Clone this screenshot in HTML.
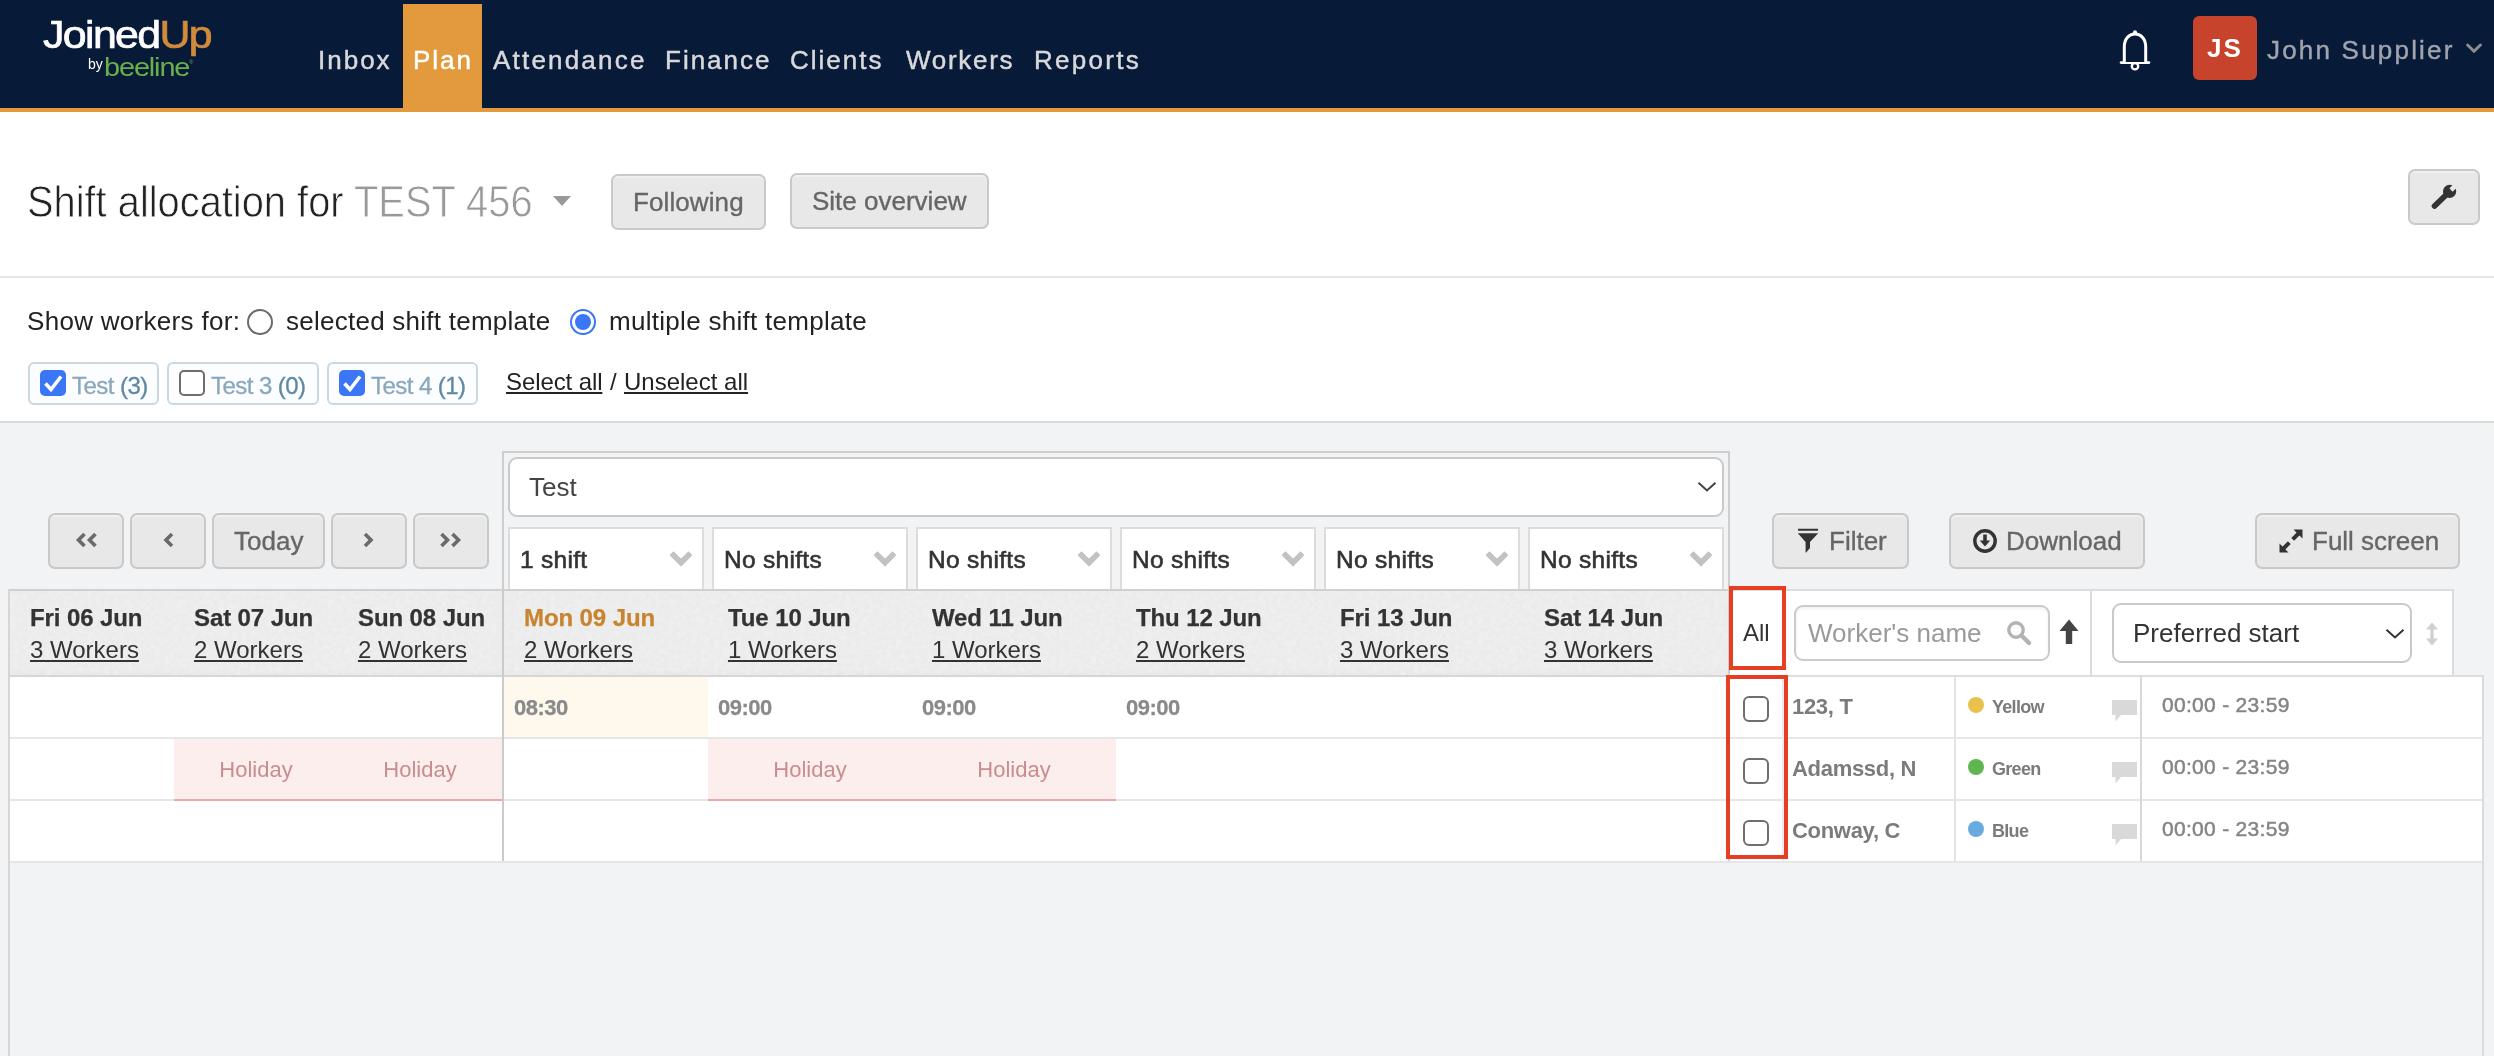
<!DOCTYPE html>
<html lang="en">
<head>
<meta charset="utf-8">
<title>Shift allocation</title>
<style>
*{box-sizing:border-box;margin:0;padding:0}
html,body{width:2494px;height:1056px;overflow:hidden}
body{position:relative;will-change:transform;background:#f2f3f5;font-family:"Liberation Sans",Arial,Helvetica,sans-serif;color:#222;-webkit-font-smoothing:antialiased}
.abs{position:absolute}
.t{position:absolute;white-space:nowrap;line-height:1}
a{color:inherit}
/* navbar */
#nav{left:0;top:0;width:2494px;height:112px;background:#071a37;border-bottom:4px solid #e29a3c}
#plan{left:403px;top:4px;width:79px;height:108px;background:#e29a3c}
.nv{font-size:26px;letter-spacing:2px;color:#d9d9dc;top:47px;-webkit-text-stroke:.45px #d9d9dc}
/* white sections */
#sec1{left:0;top:112px;width:2494px;height:166px;background:#fff;border-bottom:2px solid #e6e6e6}
#sec2{left:0;top:278px;width:2494px;height:145px;background:#fff;border-bottom:2px solid #d9d9d9}
.btn{position:absolute;background:#e8e8e8;border:2px solid #c9c9c9;border-radius:7px;color:#666;font-size:26px;line-height:1;white-space:nowrap;box-shadow:inset 0 2px 0 rgba(255,255,255,.35)}
.btn span{position:absolute;white-space:nowrap;-webkit-text-stroke:.35px #666}
.chip{position:absolute;top:362px;height:43px;border:2px solid #c9d9e3;border-radius:6px;background:#fcfdfe}
.cb{position:absolute;width:26px;height:26px;border-radius:5px}
.cb.on{background:#3a76f5}
.cb.off{background:#fff;border:2px solid #6e6e6e}
.chip .t{font-size:24px;color:#8aa7bc;top:10px;letter-spacing:-.55px;-webkit-text-stroke:.3px #8aa7bc}
.chip .t b{font-weight:normal;color:#5e88a4;-webkit-text-stroke:.3px #5e88a4}

/* schedule */
.nb{top:513px;height:56px}
.sel6{position:absolute;top:527px;height:64px;width:196px;background:#fff;border:2px solid #dcdcdc;border-bottom:none}
.sel6 .t{left:10px;top:19px;font-size:24.5px;letter-spacing:.3px;color:#333;-webkit-text-stroke:.6px #333}
.sel6 svg{position:absolute;left:160px;top:22px}
.dh{font-size:24px;font-weight:bold;color:#333;top:606px;letter-spacing:-.1px;margin-left:1px;-webkit-text-stroke:.25px currentColor}
.dw{font-size:24px;color:#333;top:638px;text-decoration:underline;margin-left:1px}
.hl{position:absolute;background:#e6e6e6;height:2px}
.vl{position:absolute;background:#e4e4e4;width:2px}
.tm{font-size:22px;font-weight:bold;color:#8a8a8a;top:697px;letter-spacing:-.5px;-webkit-text-stroke:.25px #8a8a8a}
.hol{position:absolute;top:739px;height:62px;background:#fdeeee;border-bottom:2px solid #eaa8a8}
.hol .t{font-size:22px;color:#c98d8d;top:20px;width:164px;text-align:center}
.wn{font-size:22px;font-weight:bold;color:#7b7b7b;left:1792px;letter-spacing:-.3px}
.wl{font-size:18px;font-weight:bold;color:#7b7b7b;left:1992px;letter-spacing:-.7px}
.wt{font-size:21px;color:#858585;left:2162px;letter-spacing:.3px;-webkit-text-stroke:.5px #858585}
.dot{position:absolute;left:1968px;width:16px;height:16px;border-radius:50%}
.cm{position:absolute;left:2112px}
.rb{position:absolute;border:4px solid #e73d22}
</style>
</head>
<body>

<!-- ===== NAVBAR ===== -->
<div id="nav" class="abs"></div>
<div id="plan" class="abs"></div>
<div class="t" style="left:43px;top:15px;font-size:39px;letter-spacing:-1.5px;color:#fff;transform:scaleX(1.1);transform-origin:0 0;-webkit-text-stroke:.7px #fff">Joined<span style="color:#d28a3c;-webkit-text-stroke:.7px #d28a3c">Up</span></div>
<div class="t" style="left:88px;top:57px;font-size:14px;color:#fff">by</div>
<div class="t" style="left:104px;top:54px;font-size:26px;letter-spacing:-1px;color:#6ab04a;transform:scaleX(1.11);transform-origin:0 0">beeline<span style="font-size:5px;vertical-align:12px;letter-spacing:0">®</span></div>
<div class="t nv" style="left:318px">Inbox</div>
<div class="t nv" style="left:413px;color:#fff;-webkit-text-stroke:.45px #fff">Plan</div>
<div class="t nv" style="left:493px;letter-spacing:2.2px">Attendance</div>
<div class="t nv" style="left:665px">Finance</div>
<div class="t nv" style="left:790px">Clients</div>
<div class="t nv" style="left:906px;letter-spacing:1.7px">Workers</div>
<div class="t nv" style="left:1034px;letter-spacing:2.3px">Reports</div>


<svg class="abs" style="left:2118px;top:29px" width="34" height="42" viewBox="0 0 34 42">
<circle cx="17" cy="37.2" r="3.2" stroke="#fff" stroke-width="2.4" fill="#071a37"/>
<path d="M3 33.6 H31" stroke="#fff" stroke-width="2.6" stroke-linecap="round" fill="none"/>
<path d="M6.3 33 V18 C6.300 9.800 10.800 5 17 5 C23.200 5 27.700 9.800 27.700 18 V33" stroke="#fff" stroke-width="3" fill="#071a37"/>
<circle cx="17" cy="3.400" r="2.1" fill="#fff"/>
</svg>
<div class="abs" style="left:2193px;top:16px;width:64px;height:64px;border-radius:6px;background:#c8432b"></div>
<div class="t" style="left:2207px;top:35px;font-size:26px;font-weight:bold;letter-spacing:2px;color:#fff">JS</div>
<div class="t" style="left:2267px;top:37px;font-size:26px;letter-spacing:2.2px;color:#a0a4ae;-webkit-text-stroke:.4px #a0a4ae">John Supplier</div>
<svg class="abs" style="left:2465px;top:42px" width="18" height="13" viewBox="0 0 18 13"><path d="M2.6 3 L9 9.300 L15.400 3" stroke="#8e8e8e" stroke-width="3" fill="none" stroke-linecap="round" stroke-linejoin="round"/></svg>

<!-- ===== TITLE SECTION ===== -->
<div id="sec1" class="abs"></div>
<div class="t" id="title" style="left:27px;top:179px;font-size:45px;color:#222;transform:scaleX(.885);transform-origin:0 0;-webkit-text-stroke:.8px #fff">Shift allocation for</div>
<div class="t" id="title2" style="left:354px;top:179px;font-size:45px;color:#999;transform:scaleX(.885);transform-origin:0 0;-webkit-text-stroke:.8px #fff">TEST 456</div>
<div class="abs" style="left:553px;top:196px;width:0;height:0;border-left:9.5px solid transparent;border-right:9.5px solid transparent;border-top:10px solid #999"></div>
<div class="btn" style="left:611px;top:174px;width:155px;height:56px"><span style="left:20px;top:13px;letter-spacing:.1px">Following</span></div>
<div class="btn" style="left:790px;top:173px;width:199px;height:56px"><span style="left:20px;top:13px">Site overview</span></div>
<div class="btn" style="left:2408px;top:169px;width:72px;height:56px">
<svg class="abs" style="left:20px;top:13px" width="30" height="28" viewBox="0 0 30 28"><circle cx="19.6" cy="7.4" r="6.6" fill="#333"/><path d="M21 6 L28 -1" stroke="#e8e8e8" stroke-width="4.6" fill="none"/><path d="M4.6 22 L16.500 10.5" stroke="#333" stroke-width="5.8" stroke-linecap="round" fill="none"/></svg>
</div>

<!-- ===== FILTER SECTION ===== -->
<div id="sec2" class="abs"></div>
<div class="t" style="left:27px;top:308px;font-size:26px;letter-spacing:.3px">Show workers for:</div>
<div class="abs" style="left:247px;top:309px;width:26px;height:26px;border-radius:50%;border:2px solid #6b6b6b;background:#fff"></div>
<div class="t" style="left:286px;top:308px;font-size:26px;letter-spacing:.25px">selected shift template</div>
<div class="abs" style="left:570px;top:309px;width:26px;height:26px;border-radius:50%;border:2px solid #3a76f5;background:#fff"></div>
<div class="abs" style="left:575px;top:314px;width:16px;height:16px;border-radius:50%;background:#3a76f5"></div>
<div class="t" style="left:609px;top:308px;font-size:26px;letter-spacing:.29px">multiple shift template</div>

<div class="chip" style="left:28px;width:131px"><div class="cb on" style="left:10px;top:6px"><svg width="26" height="26" viewBox="0 0 26 26"><path d="M5.5 13.5 L11 19.5 L21 6.5" stroke="#fff" stroke-width="3.6" fill="none" stroke-linejoin="miter"/></svg></div><div class="t" style="left:42px">Test <b>(3)</b></div></div>
<div class="chip" style="left:167px;width:152px"><div class="cb off" style="left:10px;top:6px"></div><div class="t" style="left:42px">Test 3 <b>(0)</b></div></div>
<div class="chip" style="left:327px;width:151px"><div class="cb on" style="left:10px;top:6px"><svg width="26" height="26" viewBox="0 0 26 26"><path d="M5.5 13.5 L11 19.5 L21 6.5" stroke="#fff" stroke-width="3.6" fill="none" stroke-linejoin="miter"/></svg></div><div class="t" style="left:42px">Test 4 <b>(1)</b></div></div>
<div class="t" style="left:506px;top:370px;font-size:24px;color:#222;letter-spacing:-.1px"><a style="text-decoration:underline">Select all</a></div>
<div class="t" style="left:610px;top:370px;font-size:24px;color:#222">/</div>
<div class="t" style="left:624px;top:370px;font-size:24px;color:#222"><a style="text-decoration:underline">Unselect all</a></div>

<!-- ===== SCHEDULE ===== -->
<div class="btn nb" style="left:48px;width:76px"><svg class="abs" style="left:24.5px;top:15.5px" width="24" height="18" viewBox="0 0 24 18"><path d="M9.5 3 L3.5 9 L9.5 15 M20.500 3 L14.500 9 L20.500 15" stroke="#6a6a6a" stroke-width="3.6" fill="none"/></svg></div>
<div class="btn nb" style="left:130px;width:76px"><svg class="abs" style="left:30px;top:15.5px" width="14" height="18" viewBox="0 0 14 18"><path d="M10 3 L4 9 L10 15" stroke="#6a6a6a" stroke-width="3.6" fill="none"/></svg></div>
<div class="btn nb" style="left:212px;width:113px"><span style="left:20px;top:13px">Today</span></div>
<div class="btn nb" style="left:331px;width:76px"><svg class="abs" style="left:28px;top:15.5px" width="14" height="18" viewBox="0 0 14 18"><path d="M4 3 L10 9 L4 15" stroke="#6a6a6a" stroke-width="3.6" fill="none"/></svg></div>
<div class="btn nb" style="left:413px;width:76px"><svg class="abs" style="left:23px;top:15.5px" width="24" height="18" viewBox="0 0 24 18"><path d="M3.5 3 L9.5 9 L3.5 15 M14.500 3 L20.500 9 L14.500 15" stroke="#6a6a6a" stroke-width="3.6" fill="none"/></svg></div>
<div class="abs" style="left:502px;top:451px;width:1228px;height:412px;border:2px solid #cdcdcd;border-bottom:none"></div>
<div class="abs" style="left:508px;top:457px;width:1216px;height:60px;background:#fff;border:2px solid #c9c9c9;border-radius:9px"></div>
<div class="t" style="left:529px;top:474px;font-size:26px;color:#444">Test</div>
<svg class="abs" style="left:1697px;top:481px" width="20" height="12" viewBox="0 0 20 12"><path d="M1.5 1.7 L10 9.5 L18.5 1.7" stroke="#444" stroke-width="2" fill="none"/></svg>
<div class="sel6" style="left:508px"><div class="t">1 shift</div><svg width="22" height="16" viewBox="0 0 22 16"><path d="M0 3.5 L3.5 0 L11 7.5 L18.5 0 L22 3.5 L11 14.5 Z" transform="translate(0 .7)" fill="#c2c2c2" stroke="#c2c2c2" stroke-width="1" stroke-linejoin="round"/></svg></div>
<div class="sel6" style="left:712px"><div class="t">No shifts</div><svg width="22" height="16" viewBox="0 0 22 16"><path d="M0 3.5 L3.5 0 L11 7.5 L18.5 0 L22 3.5 L11 14.5 Z" transform="translate(0 .7)" fill="#c2c2c2" stroke="#c2c2c2" stroke-width="1" stroke-linejoin="round"/></svg></div>
<div class="sel6" style="left:916px"><div class="t">No shifts</div><svg width="22" height="16" viewBox="0 0 22 16"><path d="M0 3.5 L3.5 0 L11 7.5 L18.5 0 L22 3.5 L11 14.5 Z" transform="translate(0 .7)" fill="#c2c2c2" stroke="#c2c2c2" stroke-width="1" stroke-linejoin="round"/></svg></div>
<div class="sel6" style="left:1120px"><div class="t">No shifts</div><svg width="22" height="16" viewBox="0 0 22 16"><path d="M0 3.5 L3.5 0 L11 7.5 L18.5 0 L22 3.5 L11 14.5 Z" transform="translate(0 .7)" fill="#c2c2c2" stroke="#c2c2c2" stroke-width="1" stroke-linejoin="round"/></svg></div>
<div class="sel6" style="left:1324px"><div class="t">No shifts</div><svg width="22" height="16" viewBox="0 0 22 16"><path d="M0 3.5 L3.5 0 L11 7.5 L18.5 0 L22 3.5 L11 14.5 Z" transform="translate(0 .7)" fill="#c2c2c2" stroke="#c2c2c2" stroke-width="1" stroke-linejoin="round"/></svg></div>
<div class="sel6" style="left:1528px"><div class="t">No shifts</div><svg width="22" height="16" viewBox="0 0 22 16"><path d="M0 3.5 L3.5 0 L11 7.5 L18.5 0 L22 3.5 L11 14.5 Z" transform="translate(0 .7)" fill="#c2c2c2" stroke="#c2c2c2" stroke-width="1" stroke-linejoin="round"/></svg></div>
<div class="abs" style="left:8px;top:589px;width:1720px;height:88px;background:linear-gradient(#ebebeb 0,#ebebeb 92%,#e7e7e7 100%);border-top:2px solid #d0d0d0;border-bottom:2px solid #d6d6d6"></div>
<svg class="abs" style="left:10px;top:591px" width="1718" height="84"><filter id="nz" x="0" y="0" width="100%" height="100%"><feTurbulence type="fractalNoise" baseFrequency=".22" numOctaves="2" seed="3"/><feColorMatrix values="0 0 0 0 1  0 0 0 0 1  0 0 0 0 1  1.2 1.2 0 0 -.9"/></filter><rect width="1718" height="84" filter="url(#nz)" opacity=".3"/></svg>
<div class="abs" style="left:10px;top:677px;width:2472px;height:184px;background:#fff"></div>
<div class="abs" style="left:8px;top:589px;width:2px;height:467px;background:#d6d6d6"></div>
<div class="abs" style="left:2482px;top:675px;width:2px;height:381px;background:#dcdcdc"></div>
<div class="t dh" style="left:29px">Fri 06 Jun</div><div class="t dw" style="left:29px">3 Workers</div>
<div class="t dh" style="left:193px">Sat 07 Jun</div><div class="t dw" style="left:193px">2 Workers</div>
<div class="t dh" style="left:357px">Sun 08 Jun</div><div class="t dw" style="left:357px">2 Workers</div>
<div class="t dh" style="left:523px;color:#c8842e">Mon 09 Jun</div><div class="t dw" style="left:523px">2 Workers</div>
<div class="t dh" style="left:727px">Tue 10 Jun</div><div class="t dw" style="left:727px">1 Workers</div>
<div class="t dh" style="left:931px">Wed 11 Jun</div><div class="t dw" style="left:931px">1 Workers</div>
<div class="t dh" style="left:1135px">Thu 12 Jun</div><div class="t dw" style="left:1135px">2 Workers</div>
<div class="t dh" style="left:1339px">Fri 13 Jun</div><div class="t dw" style="left:1339px">3 Workers</div>
<div class="t dh" style="left:1543px">Sat 14 Jun</div><div class="t dw" style="left:1543px">3 Workers</div>
<div class="abs" style="left:504px;top:677px;width:204px;height:60px;background:#fef8ed"></div>
<div class="t tm" style="left:514px">08:30</div>
<div class="t tm" style="left:718px">09:00</div>
<div class="t tm" style="left:922px">09:00</div>
<div class="t tm" style="left:1126px">09:00</div>
<div class="hl" style="left:10px;top:737px;width:2472px"></div>
<div class="hl" style="left:10px;top:799px;width:2472px"></div>
<div class="hl" style="left:10px;top:861px;width:2472px"></div>
<div class="hol" style="left:174px;width:328px"><div class="t" style="left:0">Holiday</div><div class="t" style="left:164px">Holiday</div></div>
<div class="hol" style="left:708px;width:408px"><div class="t" style="left:20px">Holiday</div><div class="t" style="left:224px">Holiday</div></div>
<div class="abs" style="left:502px;top:589px;width:2px;height:272px;background:#cbcbcb"></div>
<div class="abs" style="left:1728px;top:589px;width:2px;height:272px;background:#cbcbcb"></div>
<div class="abs" style="left:1730px;top:589px;width:724px;height:88px;background:#fff;border-top:2px solid #dcdcdc;border-right:2px solid #dcdcdc"></div>
<div class="hl" style="left:1730px;top:675px;width:754px;background:#dedede"></div>
<div class="vl" style="left:2090px;top:591px;height:84px;background:#dcdcdc"></div>
<div class="btn nb" style="left:1772px;width:137px"><svg class="abs" style="left:22px;top:13px" width="24" height="26" viewBox="0 0 24 26"><path d="M2 .8 H22 V2.8 H2 Z M1.8 5.2 H22.2 L14 14 V20 L10.2 24.6 H9.6 V14 Z" fill="#333"/></svg><span style="left:55px;top:13px">Filter</span></div>
<div class="btn nb" style="left:1949px;width:196px"><svg class="abs" style="left:21px;top:13px" width="26" height="26" viewBox="0 0 26 26"><circle cx="13" cy="13" r="10.2" stroke="#333" stroke-width="3.4" fill="none"/><path d="M11.2 6.5 H14.8 V12.5 H18.2 L13 18.5 L7.8 12.5 H11.2 Z" fill="#333"/></svg><span style="left:55px;top:13px">Download</span></div>
<div class="btn nb" style="left:2255px;width:205px"><svg class="abs" style="left:21px;top:13px" width="26" height="26" viewBox="0 0 26 26"><path d="M5 21 L11.300 14.700 M14.700 11.300 L21 5" stroke="#333" stroke-width="4"/><path d="M15.5 1.5 H24.500 V10.5 Z M1.5 15.5 V24.500 H10.5 Z" fill="#333"/></svg><span style="left:55px;top:13px">Full screen</span></div>
<div class="t" style="left:1743px;top:621px;font-size:24px;color:#333">All</div>
<div class="abs" style="left:1794px;top:605px;width:256px;height:56px;background:#fff;border:2px solid #cbcbcb;border-radius:9px;box-shadow:inset 0 2px 3px rgba(0,0,0,.06)"></div>
<div class="t" style="left:1808px;top:620px;font-size:26px;color:#9a9a9a">Worker's name</div>
<svg class="abs" style="left:2006px;top:620px" width="26" height="26" viewBox="0 0 26 26"><circle cx="10" cy="10" r="7.2" stroke="#b3b3b3" stroke-width="3.4" fill="none"/><path d="M15.5 15.5 L23 23" stroke="#b3b3b3" stroke-width="4.4" stroke-linecap="round"/></svg>
<svg class="abs" style="left:2059px;top:619px" width="20" height="26" viewBox="0 0 20 26"><path d="M10 0.5 L19.5 12 H13.2 V25 H6.8 V12 H0.5 Z" fill="#444"/></svg>
<div class="abs" style="left:2112px;top:603px;width:300px;height:60px;background:#fff;border:2px solid #c9c9c9;border-radius:9px"></div>
<div class="t" style="left:2133px;top:620px;font-size:26px;color:#333">Preferred start</div>
<svg class="abs" style="left:2385px;top:628px" width="20" height="12" viewBox="0 0 20 12"><path d="M1.5 1.7 L10 9.5 L18.5 1.7" stroke="#333" stroke-width="2" fill="none"/></svg>
<svg class="abs" style="left:2425px;top:622px" width="14" height="24" viewBox="0 0 14 24"><path d="M7 0.5 L13 7.5 H8.6 V16.5 H13 L7 23.5 L1 16.5 H5.4 V7.5 H1 Z" fill="#cfcfcf"/></svg>
<div class="cb off" style="left:1743px;top:696px;border-radius:6px"></div>
<div class="t wn" style="top:696px">123, T</div>
<div class="dot" style="top:697px;background:#e8c24b"></div>
<div class="t wl" style="top:698px">Yellow</div>
<svg class="cm" style="top:700px" width="25" height="22" viewBox="0 0 25 22"><path d="M0 0 H25 V15 H9 L3.5 21.5 V15 H0 Z" fill="#d9d9d9"/></svg>
<div class="t wt" style="top:694px">00:00 - 23:59</div>
<div class="cb off" style="left:1743px;top:758px;border-radius:6px"></div>
<div class="t wn" style="top:758px">Adamssd, N</div>
<div class="dot" style="top:759px;background:#5fb650"></div>
<div class="t wl" style="top:760px">Green</div>
<svg class="cm" style="top:762px" width="25" height="22" viewBox="0 0 25 22"><path d="M0 0 H25 V15 H9 L3.5 21.5 V15 H0 Z" fill="#d9d9d9"/></svg>
<div class="t wt" style="top:756px">00:00 - 23:59</div>
<div class="cb off" style="left:1743px;top:820px;border-radius:6px"></div>
<div class="t wn" style="top:820px">Conway, C</div>
<div class="dot" style="top:821px;background:#69abe0"></div>
<div class="t wl" style="top:822px">Blue</div>
<svg class="cm" style="top:824px" width="25" height="22" viewBox="0 0 25 22"><path d="M0 0 H25 V15 H9 L3.5 21.5 V15 H0 Z" fill="#d9d9d9"/></svg>
<div class="t wt" style="top:818px">00:00 - 23:59</div>
<div class="vl" style="left:1782px;top:677px;height:184px;background:#ececec"></div>
<div class="vl" style="left:1954px;top:677px;height:184px"></div>
<div class="vl" style="left:2140px;top:677px;height:184px;background:#d8d8d8"></div>
<div class="rb" style="left:1729px;top:586px;width:57px;height:84px"></div>
<div class="rb" style="left:1726px;top:675px;width:62px;height:184px"></div>
</body>
</html>
